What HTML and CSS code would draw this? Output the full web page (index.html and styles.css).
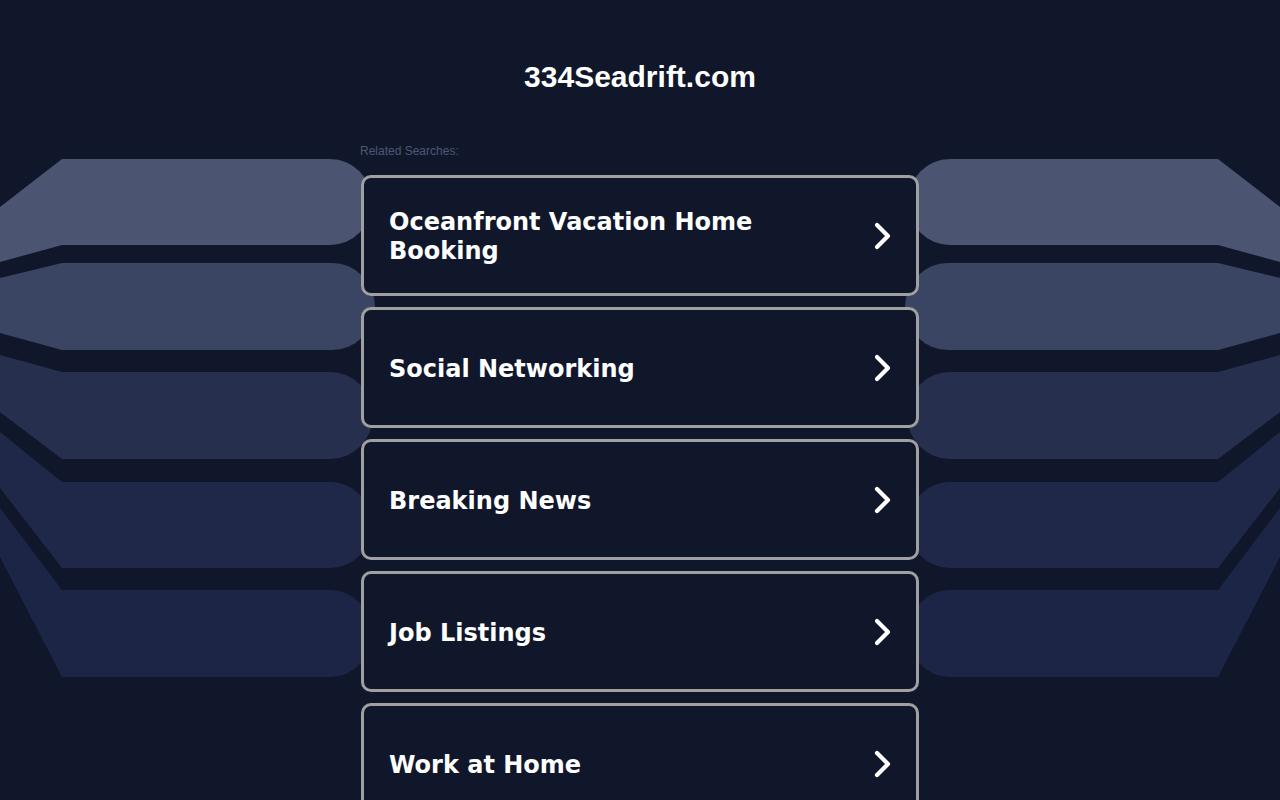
FILE: index.html
```html
<!DOCTYPE html>
<html lang="en">
<head>
<meta charset="utf-8">
<title>334Seadrift.com</title>
<link rel="stylesheet" href="styles.css">
</head>
<body>
<svg class="bg" width="1280" height="800" viewBox="0 0 1280 800" aria-hidden="true">
  <defs>
    <g id="bands">
      <path fill="#4b5572" d="M0,207 L62,159 L330,159 A42,43 0 0 1 330,245 L62,245 L0,262 Z"/>
      <path fill="#3a4463" d="M0,278 L62,263 L332,263 A43,43.5 0 0 1 332,350 L62,350 L0,333 Z"/>
      <path fill="#272f4e" d="M0,355 L62,372 L330,372 A43,43.5 0 0 1 330,459 L62,459 L0,412 Z"/>
      <path fill="#1f2848" d="M0,432 L62,482 L330,482 A42,43 0 0 1 330,568 L62,568 L0,488 Z"/>
      <path fill="#1c2545" d="M0,508 L62,590 L330,590 A42,43.5 0 0 1 330,677 L62,677 L0,557 Z"/>
    </g>
  </defs>
  <use href="#bands"/>
  <use href="#bands" transform="translate(1280,0) scale(-1,1)"/>
</svg>
<main class="page">
  <h1 class="title">334Seadrift.com</h1>
  <div class="results">
    <p class="label">Related Searches:</p>
    <a class="card" href="#"><span class="card-text">Oceanfront Vacation Home Booking</span><svg class="chev" width="20" height="28" viewBox="0 0 20 28"><path d="M5 3 L16 14 L5 25" fill="none" stroke="#fff" stroke-width="4.2" stroke-linecap="round" stroke-linejoin="round"/></svg></a>
    <a class="card" href="#"><span class="card-text">Social Networking</span><svg class="chev" width="20" height="28" viewBox="0 0 20 28"><path d="M5 3 L16 14 L5 25" fill="none" stroke="#fff" stroke-width="4.2" stroke-linecap="round" stroke-linejoin="round"/></svg></a>
    <a class="card" href="#"><span class="card-text">Breaking News</span><svg class="chev" width="20" height="28" viewBox="0 0 20 28"><path d="M5 3 L16 14 L5 25" fill="none" stroke="#fff" stroke-width="4.2" stroke-linecap="round" stroke-linejoin="round"/></svg></a>
    <a class="card" href="#"><span class="card-text">Job Listings</span><svg class="chev" width="20" height="28" viewBox="0 0 20 28"><path d="M5 3 L16 14 L5 25" fill="none" stroke="#fff" stroke-width="4.2" stroke-linecap="round" stroke-linejoin="round"/></svg></a>
    <a class="card" href="#"><span class="card-text">Work at Home</span><svg class="chev" width="20" height="28" viewBox="0 0 20 28"><path d="M5 3 L16 14 L5 25" fill="none" stroke="#fff" stroke-width="4.2" stroke-linecap="round" stroke-linejoin="round"/></svg></a>
  </div>
</main>
</body>
</html>
```

FILE: styles.css
```css
html, body {
  margin: 0;
  padding: 0;
  background: #11172b;
}
body {
  position: relative;
  min-height: 800px;
  font-family: "Liberation Sans", Arial, sans-serif;
  color: #fff;
}
.bg {
  position: absolute;
  left: 0;
  top: 0;
  z-index: 0;
}
.page {
  position: relative;
  z-index: 1;
  display: flex;
  flex-direction: column;
  align-items: center;
}
.title {
  margin: 59px 0 0;
  font-family: "Liberation Sans", Arial, sans-serif;
  font-weight: bold;
  font-size: 30px;
  line-height: 36px;
  color: #fff;
}
.results {
  width: 560px;
  margin-top: 49px;
  display: flex;
  flex-direction: column;
  gap: 11px;
}
.label {
  margin: 0 0 6px;
  font-size: 12px;
  line-height: 14px;
  color: #4c5776;
}
.card {
  margin: 0 1px;
  box-sizing: border-box;
  height: 121px;
  border: 3px solid #a0a0a0;
  border-radius: 10px;
  background: #11172b;
  display: flex;
  align-items: center;
  justify-content: space-between;
  padding: 3px 24px 0 25px;
  text-decoration: none;
  color: #fff;
}
.card-text {
  font-family: "DejaVu Sans", Verdana, sans-serif;
  font-weight: bold;
  font-size: 24px;
  line-height: 29px;
  max-width: 420px;
}
.chev {
  flex: none;
  margin-top: -3px;
}
```
